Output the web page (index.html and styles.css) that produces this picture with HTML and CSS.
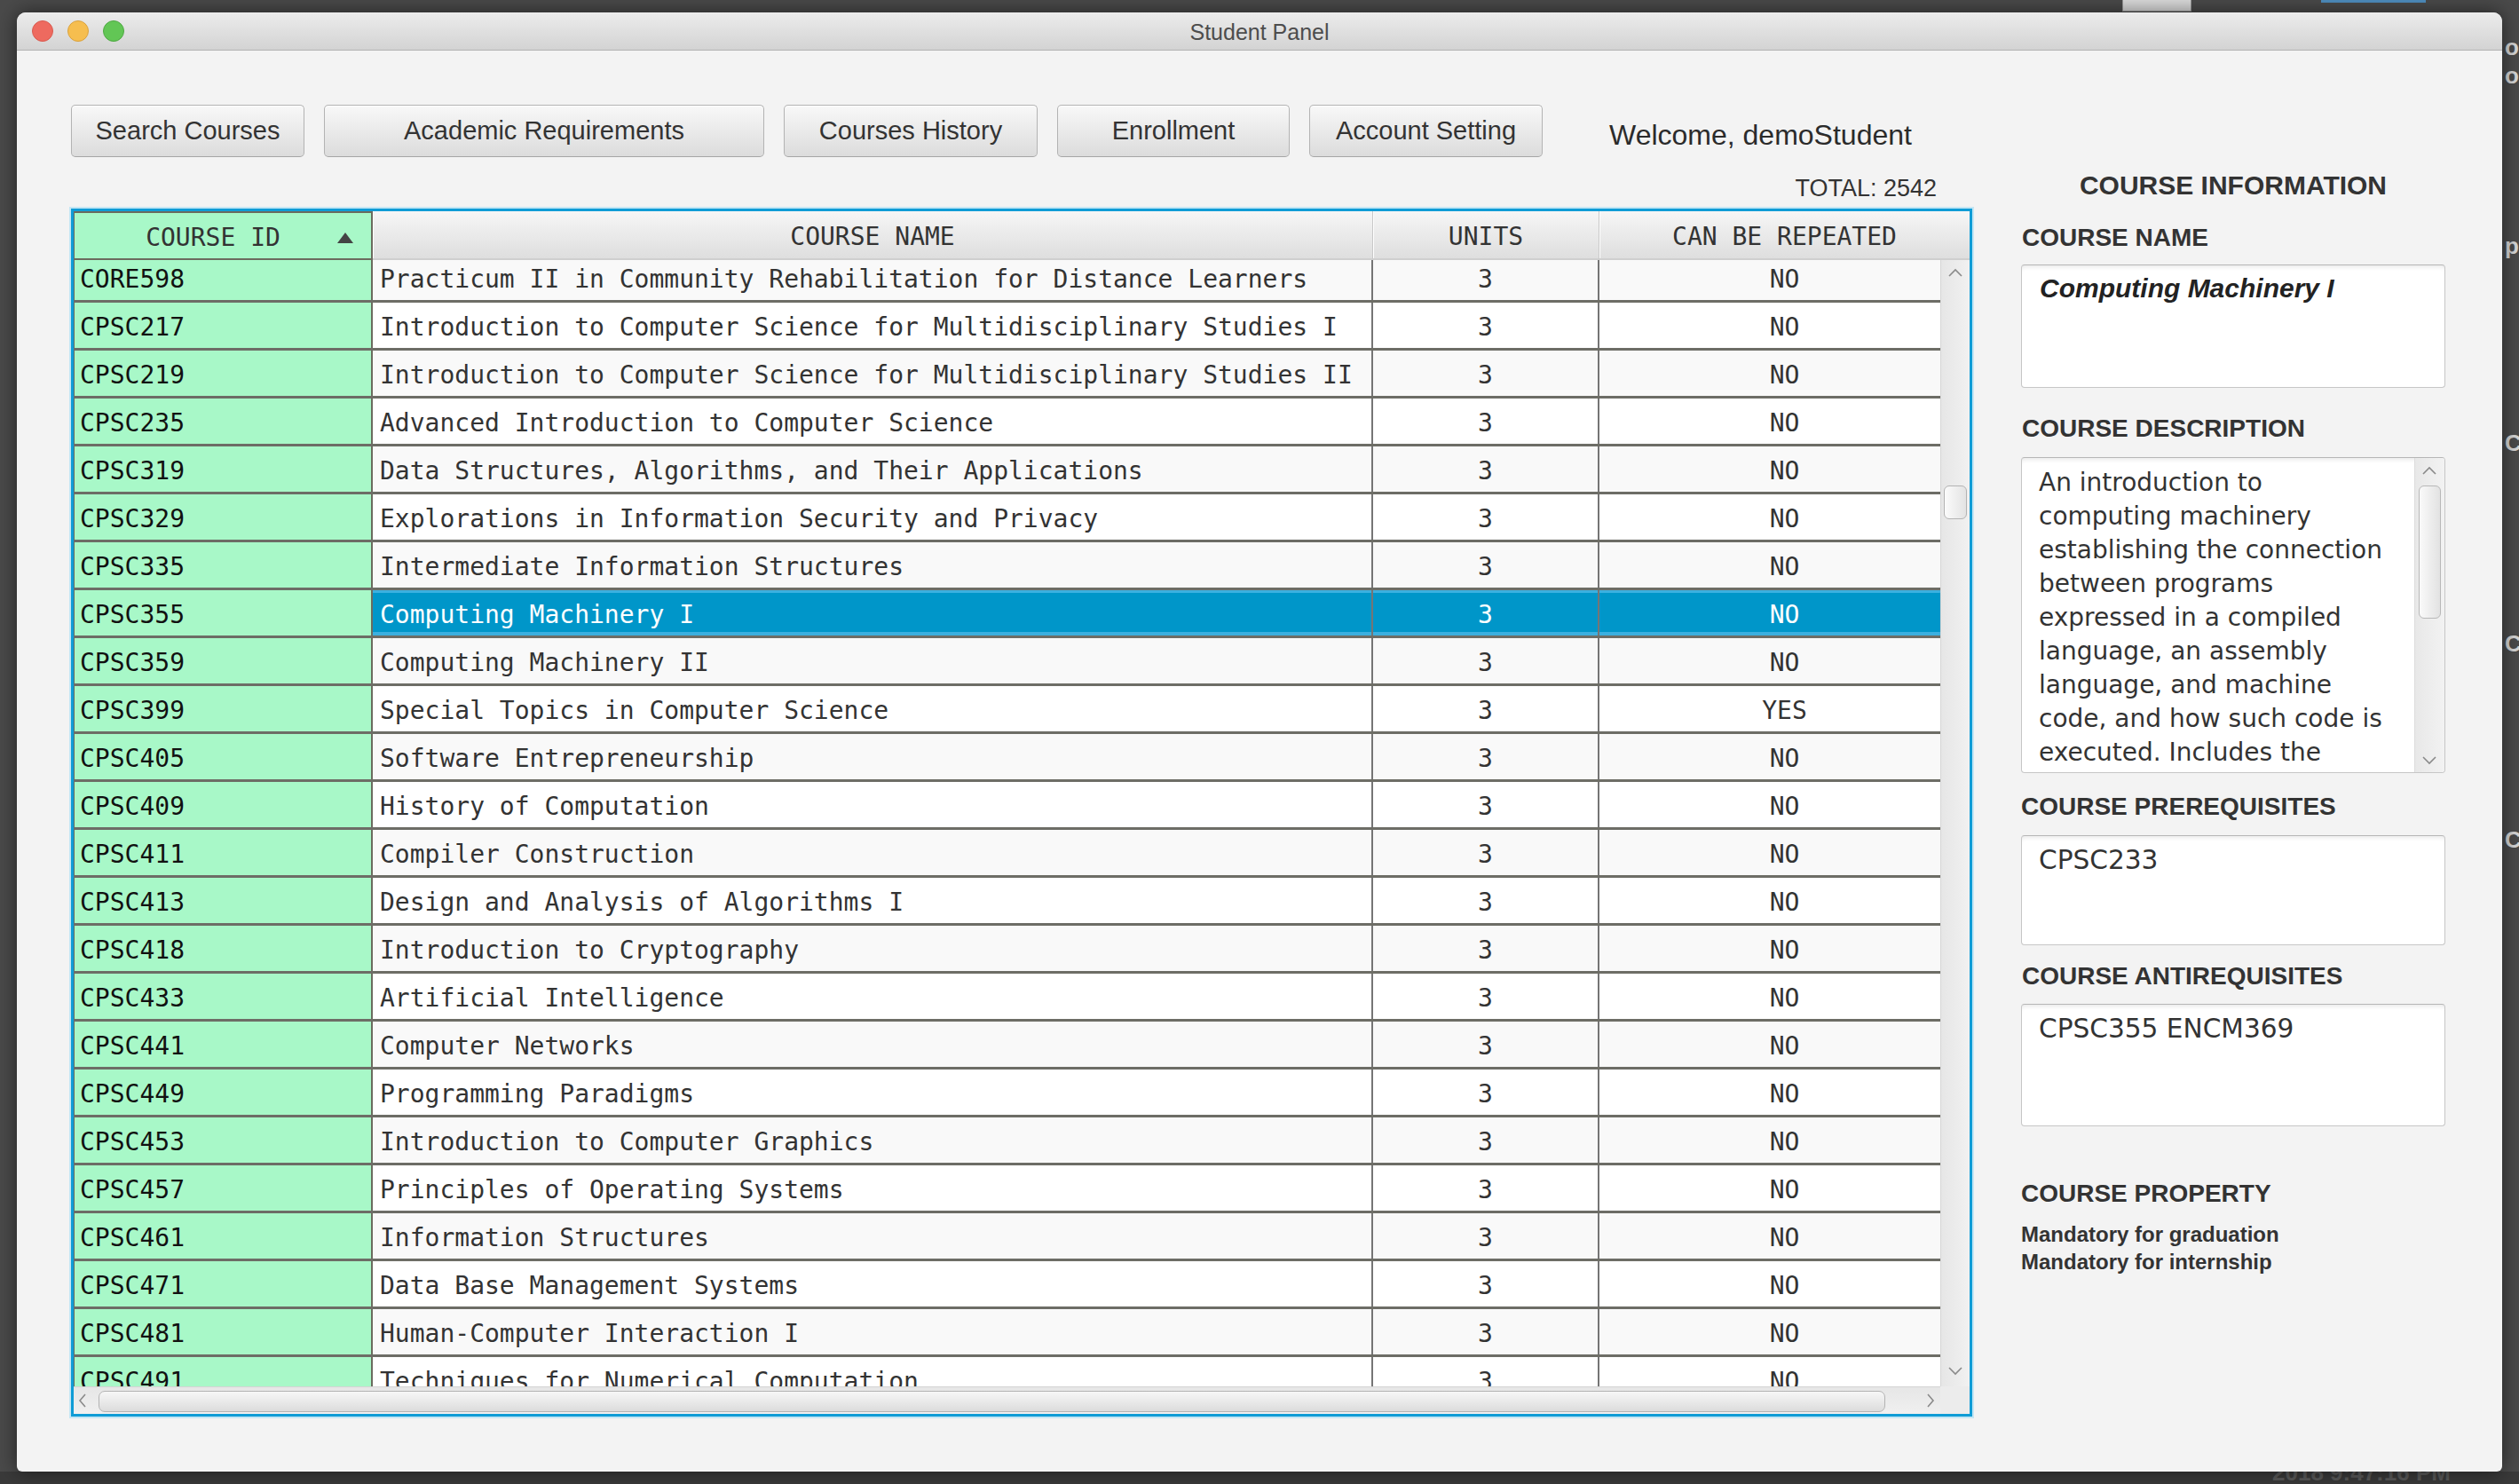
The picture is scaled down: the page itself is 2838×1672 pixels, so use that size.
FILE: index.html
```html
<!DOCTYPE html>
<html>
<head>
<meta charset="utf-8">
<title>Student Panel</title>
<link rel="stylesheet" href="styles.css">
</head>
<body>
<div class="desk-thumb"></div>
<div class="desk-bar"></div>
<div class="desk-frag f1">o</div>
<div class="desk-frag f2">o</div>
<div class="desk-frag f3">pp</div>
<div class="desk-frag f4">CF</div>
<div class="desk-frag f5">CF</div>
<div class="desk-frag f6">CF</div>
<div class="desk-bottom"><span class="desk-clock">2018 9:47:16 PM</span></div>

<div class="window">
  <div class="titlebar">
    <div class="lights">
      <span class="light red"></span>
      <span class="light yellow"></span>
      <span class="light green"></span>
    </div>
    <div class="title">Student Panel</div>
    <div></div>
  </div>

  <div class="content">
    <div class="toolbar">
      <button class="btn w1">Search Courses</button>
      <button class="btn w2">Academic Requirements</button>
      <button class="btn w3">Courses History</button>
      <button class="btn w4">Enrollment</button>
      <button class="btn w5">Account Setting</button>
      <div class="welcome">Welcome, demoStudent</div>
    </div>

    <div class="left">
      <div class="total">TOTAL: 2542</div>
      <div class="table">
        <div class="thead">
          <div class="th th-id">COURSE ID
            <svg class="sort" width="18" height="12" viewBox="0 0 18 12"><polygon points="9,0 18,12 0,12" fill="#444"/></svg>
          </div>
          <div class="th">COURSE NAME</div>
          <div class="th">UNITS</div>
          <div class="th th-last">CAN BE REPEATED</div>
        </div>
        <div class="tbody">
          <div class="rows">
            <div class="row"><div class="td id">CORE598</div><div class="td">Practicum II in Community Rehabilitation for Distance Learners</div><div class="td c">3</div><div class="td c">NO</div></div>
            <div class="row"><div class="td id">CPSC217</div><div class="td">Introduction to Computer Science for Multidisciplinary Studies I</div><div class="td c">3</div><div class="td c">NO</div></div>
            <div class="row"><div class="td id">CPSC219</div><div class="td">Introduction to Computer Science for Multidisciplinary Studies II</div><div class="td c">3</div><div class="td c">NO</div></div>
            <div class="row"><div class="td id">CPSC235</div><div class="td">Advanced Introduction to Computer Science</div><div class="td c">3</div><div class="td c">NO</div></div>
            <div class="row"><div class="td id">CPSC319</div><div class="td">Data Structures, Algorithms, and Their Applications</div><div class="td c">3</div><div class="td c">NO</div></div>
            <div class="row"><div class="td id">CPSC329</div><div class="td">Explorations in Information Security and Privacy</div><div class="td c">3</div><div class="td c">NO</div></div>
            <div class="row"><div class="td id">CPSC335</div><div class="td">Intermediate Information Structures</div><div class="td c">3</div><div class="td c">NO</div></div>
            <div class="row sel"><div class="td id">CPSC355</div><div class="td">Computing Machinery I</div><div class="td c">3</div><div class="td c">NO</div></div>
            <div class="row"><div class="td id">CPSC359</div><div class="td">Computing Machinery II</div><div class="td c">3</div><div class="td c">NO</div></div>
            <div class="row"><div class="td id">CPSC399</div><div class="td">Special Topics in Computer Science</div><div class="td c">3</div><div class="td c">YES</div></div>
            <div class="row"><div class="td id">CPSC405</div><div class="td">Software Entrepreneurship</div><div class="td c">3</div><div class="td c">NO</div></div>
            <div class="row"><div class="td id">CPSC409</div><div class="td">History of Computation</div><div class="td c">3</div><div class="td c">NO</div></div>
            <div class="row"><div class="td id">CPSC411</div><div class="td">Compiler Construction</div><div class="td c">3</div><div class="td c">NO</div></div>
            <div class="row"><div class="td id">CPSC413</div><div class="td">Design and Analysis of Algorithms I</div><div class="td c">3</div><div class="td c">NO</div></div>
            <div class="row"><div class="td id">CPSC418</div><div class="td">Introduction to Cryptography</div><div class="td c">3</div><div class="td c">NO</div></div>
            <div class="row"><div class="td id">CPSC433</div><div class="td">Artificial Intelligence</div><div class="td c">3</div><div class="td c">NO</div></div>
            <div class="row"><div class="td id">CPSC441</div><div class="td">Computer Networks</div><div class="td c">3</div><div class="td c">NO</div></div>
            <div class="row"><div class="td id">CPSC449</div><div class="td">Programming Paradigms</div><div class="td c">3</div><div class="td c">NO</div></div>
            <div class="row"><div class="td id">CPSC453</div><div class="td">Introduction to Computer Graphics</div><div class="td c">3</div><div class="td c">NO</div></div>
            <div class="row"><div class="td id">CPSC457</div><div class="td">Principles of Operating Systems</div><div class="td c">3</div><div class="td c">NO</div></div>
            <div class="row"><div class="td id">CPSC461</div><div class="td">Information Structures</div><div class="td c">3</div><div class="td c">NO</div></div>
            <div class="row"><div class="td id">CPSC471</div><div class="td">Data Base Management Systems</div><div class="td c">3</div><div class="td c">NO</div></div>
            <div class="row"><div class="td id">CPSC481</div><div class="td">Human-Computer Interaction I</div><div class="td c">3</div><div class="td c">NO</div></div>
            <div class="row"><div class="td id">CPSC491</div><div class="td">Techniques for Numerical Computation</div><div class="td c">3</div><div class="td c">NO</div></div>
          </div>
          <div class="vscroll">
            <svg class="arr-up" width="16" height="10" viewBox="0 0 16 10"><polyline points="1,9 8,2 15,9" fill="none" stroke="#8a8a8a" stroke-width="1.6"/></svg>
            <div class="vthumb"></div>
            <svg class="arr-down" width="16" height="10" viewBox="0 0 16 10"><polyline points="1,1 8,8 15,1" fill="none" stroke="#8a8a8a" stroke-width="1.6"/></svg>
          </div>
        </div>
        <div class="hscroll">
          <svg class="arr-left" width="10" height="16" viewBox="0 0 10 16"><polyline points="8,1 2,8 8,15" fill="none" stroke="#8a8a8a" stroke-width="1.6"/></svg>
          <div class="hthumb"></div>
          <svg class="arr-right" width="10" height="16" viewBox="0 0 10 16"><polyline points="2,1 8,8 2,15" fill="none" stroke="#8a8a8a" stroke-width="1.6"/></svg>
          <div class="corner"></div>
        </div>
      </div>
    </div>

    <div class="info">
      <div class="info-title">COURSE INFORMATION</div>
      <div class="label l-name">COURSE NAME</div>
      <div class="box box-name">Computing Machinery I</div>
      <div class="label l-desc">COURSE DESCRIPTION</div>
      <div class="box box-desc">
        <div class="desc-text">An introduction to computing machinery establishing the connection between programs expressed in a compiled language, an assembly language, and machine code, and how such code is executed. Includes the</div>
        <div class="desc-scroll">
          <svg class="d-up" width="16" height="10" viewBox="0 0 16 10"><polyline points="1,9 8,2 15,9" fill="none" stroke="#8a8a8a" stroke-width="1.6"/></svg>
          <div class="d-thumb"></div>
          <svg class="d-down" width="16" height="10" viewBox="0 0 16 10"><polyline points="1,1 8,8 15,1" fill="none" stroke="#8a8a8a" stroke-width="1.6"/></svg>
        </div>
      </div>
      <div class="label l-pre">COURSE PREREQUISITES</div>
      <div class="box box-pre">CPSC233</div>
      <div class="label l-anti">COURSE ANTIREQUISITES</div>
      <div class="box box-anti">CPSC355 ENCM369</div>
      <div class="label l-prop">COURSE PROPERTY</div>
      <div class="props">
        <div>Mandatory for graduation</div>
        <div>Mandatory for internship</div>
      </div>
    </div>
  </div>
</div>
</body>
</html>
```

FILE: styles.css
```css
html, body {
  margin: 0;
  padding: 0;
}
body {
  width: 2838px;
  height: 1672px;
  overflow: hidden;
  position: relative;
  background: #4a4a4a;
  font-family: "Liberation Sans", Arial, Helvetica, sans-serif;
  color: #333;
}

/* desktop decorations behind the window */
.desk-thumb {
  position: absolute;
  left: 2391px;
  top: -2px;
  width: 76px;
  height: 13px;
  background: #dcdcdc;
  border: 1px solid #9a9a9a;
}
.desk-bar {
  position: absolute;
  left: 2615px;
  top: 0;
  width: 118px;
  height: 3px;
  background: #4f8fc0;
}
.desk-frag {
  position: absolute;
  left: 2822px;
  font-weight: bold;
  font-size: 26px;
  color: #d5d5d5;
  line-height: 30px;
}
.f1 { top: 38px; }
.f2 { top: 70px; }
.f3 { top: 262px; }
.f4 { top: 484px; }
.f5 { top: 710px; }
.f6 { top: 931px; }
.desk-bottom {
  position: absolute;
  left: 0;
  top: 1658px;
  width: 2838px;
  height: 14px;
  background: #3a3a3a;
  overflow: hidden;
}
.desk-clock {
  position: absolute;
  left: 2560px;
  top: -14px;
  font-size: 26px;
  font-weight: bold;
  color: #5a5a5a;
}

/* window */
.window {
  position: absolute;
  left: 19px;
  top: 14px;
  width: 2800px;
  height: 1644px;
  background: #f3f3f3;
  border-radius: 10px 10px 6px 6px;
  box-shadow: 0 0 22px rgba(0, 0, 0, 0.55);
  overflow: hidden;
  display: flex;
  flex-direction: column;
}
.titlebar {
  height: 43px;
  flex: none;
  box-sizing: border-box;
  border-bottom: 1px solid #b3b3b3;
  background: linear-gradient(#ececec, #d3d3d3);
  display: grid;
  grid-template-columns: 1fr auto 1fr;
  align-items: center;
}
.lights {
  display: flex;
  gap: 16px;
  padding-left: 17px;
}
.light {
  width: 24px;
  height: 24px;
  border-radius: 50%;
  box-sizing: border-box;
}
.red { background: #ee6a5f; border: 1px solid #d85b50; }
.yellow { background: #f6be4f; border: 1px solid #d9a23f; }
.green { background: #62c655; border: 1px solid #4fa843; }
.title {
  font-size: 25px;
  color: #4d4d4d;
  padding-top: 2px;
}

.content {
  padding: 61px 0 0 61px;
  display: grid;
  grid-template-columns: 2142px 478px;
  grid-template-rows: 59px auto;
  column-gap: 55px;
}

/* toolbar */
.toolbar {
  grid-column: 1 / -1;
  display: flex;
  align-items: center;
  gap: 22px;
  height: 59px;
}
.btn {
  height: 59px;
  box-sizing: border-box;
  border: 1px solid #b3b3b3;
  border-bottom-color: #a6a6a6;
  border-radius: 5px;
  background: linear-gradient(#f8f8f8, #dcdcdc);
  font-family: "Liberation Sans", Arial, Helvetica, sans-serif;
  font-size: 29px;
  color: #333;
  padding: 0;
  margin: 0;
  box-shadow: inset 0 1px 0 #ffffff;
}
.w1 { width: 263px; }
.w2 { width: 496px; }
.w3 { width: 286px; }
.w4 { width: 262px; }
.w5 { width: 263px; }
.welcome {
  align-self: flex-start;
  margin-left: 53px;
  padding-top: 14px;
  font-size: 32px;
  line-height: 40px;
  color: #2b2b2b;
}

/* left column */
.left {
  display: flex;
  flex-direction: column;
}
.total {
  text-align: right;
  padding-right: 40px;
  font-size: 27px;
  line-height: 30px;
  margin: 20px 0 8px;
  color: #333;
}
.table {
  height: 1361px;
  box-sizing: border-box;
  border: 3px solid #0f9cd6;
  box-shadow: 0 0 0 2px #c4e6f4;
  background: #fff;
  display: flex;
  flex-direction: column;
}
.thead {
  display: grid;
  grid-template-columns: 337px 1127px 255px 417px;
  height: 55px;
  flex: none;
}
.th {
  font-family: "DejaVu Sans Mono", "Liberation Mono", monospace;
  font-size: 28px;
  color: #333;
  display: flex;
  align-items: center;
  justify-content: center;
  padding-top: 3px;
  box-sizing: border-box;
  background: linear-gradient(#f6f6f6, #dedede);
  border-right: 1px solid #c8c8c8;
  border-bottom: 2px solid #cfcfcf;
  box-shadow: inset 1px 0 0 #ffffff;
}
.th-last {
  border-right: none;
}
.th-id {
  position: relative;
  background: #a8f8c8;
  border: 2px solid #6b6b5e;
  border-left-width: 1px;
  padding-right: 22px;
  box-shadow: none;
}
.sort {
  position: absolute;
  right: 20px;
  top: 22px;
}
.tbody {
  flex: 1;
  position: relative;
  overflow: hidden;
}
.rows {
  margin-top: -6px;
}
.row {
  display: grid;
  grid-template-columns: 337px 1127px 255px 417px;
  height: 54px;
  box-sizing: border-box;
  border-bottom: 3px solid #6d6d66;
  background: #ffffff;
}
.row:nth-child(odd) {
  background: #f9f9f9;
}
.td {
  font-family: "DejaVu Sans Mono", "Liberation Mono", monospace;
  font-size: 28px;
  color: #333;
  line-height: 46px;
  padding: 5px 0 0 8px;
  white-space: nowrap;
  overflow: hidden;
  border-right: 2px solid #757575;
}
.td:last-child {
  border-right: none;
}
.td.id {
  background: #a8f8c8;
  color: #111;
  padding-left: 6px;
  border-left: 1px solid #6b6b5e;
  border-right-color: #6b6b5e;
}
.td.c {
  text-align: center;
  padding-left: 0;
}
.row.sel {
  background: #0096c9;
  box-shadow: inset 0 3px 0 #3cb0e0, inset 0 -4px 0 #3cb0e0;
}
.row.sel .td {
  color: #ffffff;
}
.row.sel .td.id {
  color: #111;
}

/* scrollbars */
.vscroll {
  position: absolute;
  top: 0;
  right: 0;
  bottom: 0;
  width: 33px;
  box-sizing: border-box;
  border-left: 1px solid #d6d6d6;
  background: linear-gradient(90deg, #e6e6e6, #f1f1f1);
}
.arr-up {
  position: absolute;
  left: 8px;
  top: 9px;
}
.arr-down {
  position: absolute;
  left: 8px;
  bottom: 12px;
}
.vthumb {
  position: absolute;
  left: 3px;
  top: 254px;
  width: 26px;
  height: 38px;
  box-sizing: border-box;
  border: 1px solid #b3b3b3;
  border-radius: 6px;
  background: linear-gradient(90deg, #fbfbfb, #e3e3e3);
}
.hscroll {
  height: 31px;
  flex: none;
  position: relative;
  box-sizing: border-box;
  border-top: 1px solid #d4d4d4;
  background: linear-gradient(#e6e6e6, #f0f0f0);
}
.arr-left {
  position: absolute;
  left: 5px;
  top: 7px;
}
.arr-right {
  position: absolute;
  left: 2087px;
  top: 7px;
}
.hthumb {
  position: absolute;
  left: 28px;
  top: 4px;
  width: 2013px;
  height: 24px;
  box-sizing: border-box;
  border: 1px solid #b3b3b3;
  border-radius: 7px;
  background: linear-gradient(#f7f7f7, #dcdcdc);
}
.corner {
  position: absolute;
  right: 0;
  top: -1px;
  width: 33px;
  height: 31px;
  background: #ececec;
}

/* right info panel */
.info {
  display: flex;
  flex-direction: column;
}
.info-title {
  text-align: center;
  font-weight: bold;
  font-size: 30px;
  line-height: 34px;
  margin-top: 15px;
  color: #333;
}
.label {
  font-weight: bold;
  font-size: 28px;
  line-height: 32px;
  color: #333;
  padding-left: 1px;
}
.l-name { margin-top: 26px; }
.l-desc { margin-top: 30px; }
.l-pre { margin-top: 22px; padding-left: 0; }
.l-anti { margin-top: 19px; }
.l-prop { margin-top: 60px; padding-left: 0; }
.box {
  background: #ffffff;
  border: 1px solid #c6c6c6;
  border-top-color: #b6b6b6;
  border-radius: 4px;
  box-sizing: border-box;
  box-shadow: inset 0 6px 5px -4px rgba(0, 0, 0, 0.09);
  color: #333;
}
.box-name {
  margin-top: 14px;
  height: 139px;
  padding: 8px 20px;
  font-weight: bold;
  font-style: italic;
  font-size: 30px;
  line-height: 36px;
  color: #222;
}
.box-desc {
  margin-top: 16px;
  height: 356px;
  display: flex;
  overflow: hidden;
}
.desc-text {
  flex: 1;
  padding: 9px 25px 0 19px;
  font-family: "DejaVu Sans", "Verdana", sans-serif;
  font-size: 28px;
  line-height: 38px;
  overflow: hidden;
  color: #333;
}
.desc-scroll {
  flex: none;
  width: 34px;
  position: relative;
  box-sizing: border-box;
  border-left: 1px solid #dcdcdc;
  background: linear-gradient(90deg, #e8e8e8, #f2f2f2);
}
.d-up {
  position: absolute;
  left: 8px;
  top: 9px;
}
.d-down {
  position: absolute;
  left: 8px;
  bottom: 8px;
}
.d-thumb {
  position: absolute;
  left: 4px;
  top: 31px;
  width: 25px;
  height: 150px;
  box-sizing: border-box;
  border: 1px solid #b8b8b8;
  border-radius: 6px;
  background: linear-gradient(90deg, #fafafa, #e2e2e2);
}
.box-pre,
.box-anti {
  padding: 8px 19px;
  font-family: "DejaVu Sans", "Verdana", sans-serif;
  font-size: 29.6px;
  line-height: 38px;
}
.box-pre {
  margin-top: 16px;
  height: 124px;
}
.box-anti {
  margin-top: 15px;
  height: 138px;
}
.props {
  margin-top: 14px;
  font-weight: bold;
  font-size: 24px;
  line-height: 31px;
  color: #333;
}
```
